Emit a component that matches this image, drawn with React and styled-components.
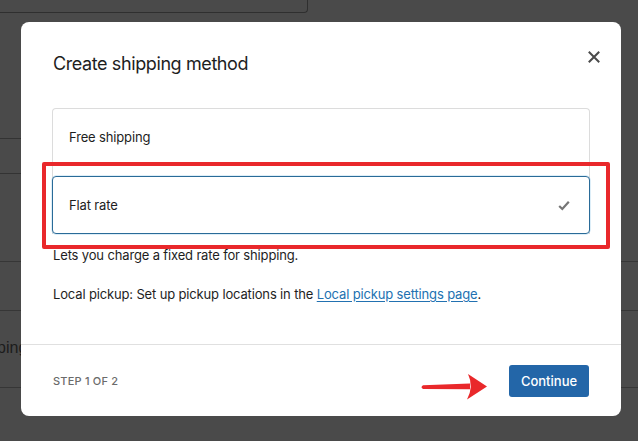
import React from "react";
import styled, { createGlobalStyle } from "styled-components";

const Global = createGlobalStyle`
  html, body { margin: 0; padding: 0; }
  body { width: 638px; height: 441px; overflow: hidden; font-family: Inter, "Noto Sans", sans-serif; }
  * { box-sizing: border-box; }
`;

const Page = styled.div`
  position: relative;
  width: 638px;
  height: 441px;
  background: #4a4a4a;
  overflow: hidden;
  display: flex;
  flex-direction: column;
`;

const TopField = styled.div`
  width: 308px;
  height: 13px;
  border-bottom: 1px solid #2f2f2f;
  border-right: 1px solid #2f2f2f;
  border-bottom-right-radius: 4px;
`;

const SettingRow = styled.div`
  width: 300px;
  height: 36px;
  margin-top: ${(p) => p.$gap}px;
  border-top: 1px solid #333;
  border-bottom: 1px solid #333;
`;

const Table = styled.div`
  margin-top: 87px;
  border-top: 1px solid #363636;
  display: flex;
  flex-direction: column;
`;

const TableRow = styled.div`
  height: ${(p) => p.$h}px;
  border-bottom: 1px solid #363636;
  display: flex;
  align-items: center;
`;

const BgText = styled.span`
  margin-left: -35px;
  font-family: "Liberation Sans", Arial, sans-serif;
  font-size: 16px;
  color: #1c1c1c;
  white-space: nowrap;
  margin-top: -2px;
`;

const Modal = styled.div`
  position: absolute;
  left: 21px;
  top: 22px;
  width: 600px;
  height: 394px;
  background: #fff;
  border-radius: 8px;
  display: flex;
  flex-direction: column;
`;

const Header = styled.div`
  display: flex;
  align-items: flex-start;
  justify-content: space-between;
  padding: 28px 15px 0 32px;
`;

const Title = styled.h1`
  margin: 0;
  font-size: 18px;
  line-height: 28px;
  font-weight: 400;
  color: #1e1e1e;
  letter-spacing: -0.4px;
`;

const CloseButton = styled.button`
  width: 24px;
  height: 24px;
  margin-top: -5px;
  padding: 0;
  border: none;
  background: none;
  display: flex;
  align-items: center;
  justify-content: center;
  color: #4a4a4a;
`;

const Body = styled.div`
  flex: 1;
  padding: 30px 31px 0 31px;
  display: flex;
  flex-direction: column;
  letter-spacing: -0.15px;
`;

const OptionList = styled.div`
  border: 1px solid #dcdcdc;
  border-bottom: none;
  border-radius: 4px 4px 0 0;
  display: flex;
  flex-direction: column;
`;

const Option = styled.div`
  display: flex;
  align-items: ${(p) => (p.$selected ? "center" : "flex-start")};
  justify-content: space-between;
  height: ${(p) => (p.$selected ? "58px" : "67px")};
  margin: ${(p) => (p.$selected ? "0 -1px" : "0")};
  padding: ${(p) => (p.$selected ? "0 19px 0 16px" : "19px 16px 0 16px")};
  border: ${(p) => (p.$selected ? "1.5px solid #2a6b98" : "none")};
  border-radius: ${(p) => (p.$selected ? "4px" : "0")};
  box-shadow: ${(p) => (p.$selected ? "0 0 0 0.5px rgba(120,190,230,0.5)" : "none")};
  font-size: 13px;
  line-height: 18px;
  color: #1e1e1e;
`;

const Text = styled.p`
  margin: ${(p) => p.$mt}px 0 0 1px;
  font-size: 13px;
  line-height: 20px;
  color: #1e1e1e;
`;

const Link = styled.a`
  color: #2271b1;
  text-decoration: underline;
  text-underline-offset: 2px;
`;

const Footer = styled.div`
  height: 72px;
  border-top: 1px solid #e0e0e0;
  display: flex;
  align-items: center;
  justify-content: space-between;
  padding: 0 32px;
`;

const Step = styled.span`
  font-size: 11px;
  font-weight: 500;
  letter-spacing: 0.2px;
  color: #6b6b6b;
  text-transform: uppercase;
`;

const Primary = styled.button`
  width: 80px;
  height: 32px;
  border: none;
  border-radius: 3px;
  background: #2366a8;
  color: #fff;
  font-family: inherit;
  font-size: 13px;
  font-weight: 500;
`;

const Highlight = styled.div`
  position: absolute;
  left: 21px;
  top: 140px;
  width: 568px;
  height: 87px;
  border: 4px solid #e9282b;
  border-radius: 2px;
  pointer-events: none;
`;

const ArrowMark = styled.svg`
  position: absolute;
  left: 397px;
  top: 350px;
  pointer-events: none;
`;

export default function App() {
  return (
    <>
      <Global />
      <Page>
        <TopField />
        <SettingRow $gap={125} />
        <Table>
          <TableRow $h={49} />
          <TableRow $h={77}>
            <BgText>Shipping</BgText>
          </TableRow>
        </Table>
        <Modal>
          <Header>
            <Title>Create shipping method</Title>
            <CloseButton aria-label="Close">
              <svg width="12" height="12" viewBox="0 0 12 12">
                <path d="M1.5 1.5 L10.5 10.5 M10.5 1.5 L1.5 10.5" stroke="currentColor" strokeWidth="2" strokeLinecap="square" />
              </svg>
            </CloseButton>
          </Header>
          <Body>
            <OptionList>
              <Option>Free shipping</Option>
              <Option $selected>
                <span>Flat rate</span>
                <svg width="12" height="11" viewBox="0 0 12 11">
                  <path d="M1.2 6 L4.3 9 L10.8 1.8" fill="none" stroke="#767676" strokeWidth="2.2" />
                </svg>
              </Option>
            </OptionList>
            <Text $mt={11}>Lets you charge a fixed rate for shipping.</Text>
            <Text $mt={19}>
              Local pickup: Set up pickup locations in the <Link href="#">Local pickup settings page</Link>.
            </Text>
          </Body>
          <Footer>
            <Step>Step 1 of 2</Step>
            <Primary>Continue</Primary>
          </Footer>
          <Highlight />
          <ArrowMark width="72" height="30" viewBox="0 0 72 30">
            <path d="M5 13.2 L52 11.6 L52 17.2 L5 17 Q2 15.1 5 13.2 Z" fill="#e9282b" />
            <path d="M50 2 L69 14.5 L49 27.5 Q56 14.5 50 2 Z" fill="#e9282b" />
          </ArrowMark>
        </Modal>
      </Page>
    </>
  );
}
